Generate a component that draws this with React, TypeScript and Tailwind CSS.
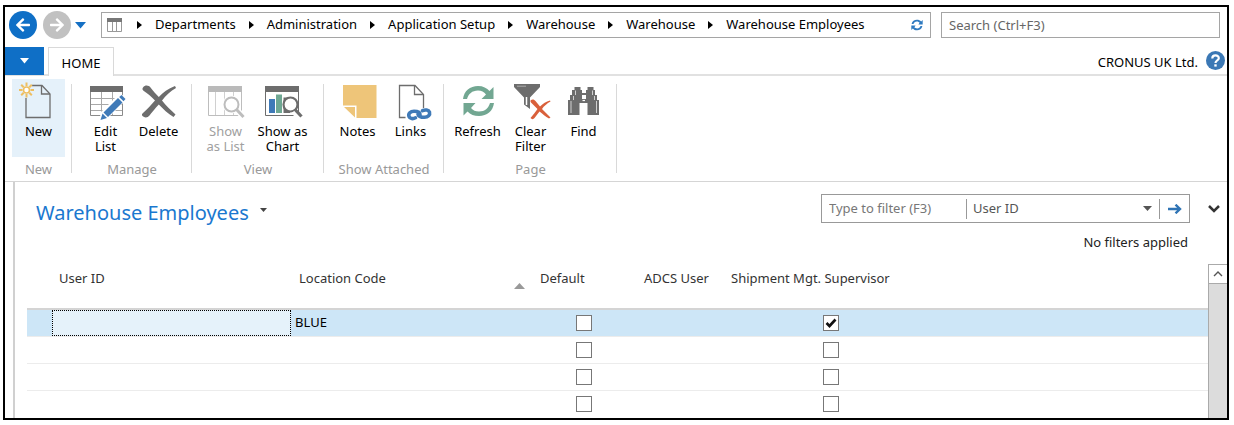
import { useState, type ReactNode } from "react";
import { FaArrowLeft, FaArrowRight } from "react-icons/fa";

const GRAY = "#6d6d6d";
const BLUE = "#3f7ab8";

function NewIcon() {
  return (
    <>
      <path d="M12 3.5H22L30 12V35.5H6V16" fill="none" stroke={GRAY} strokeWidth="1.3" />
      <path d="M21.5 3.5V12H30" fill="none" stroke={GRAY} strokeWidth="1.3" />
      <g stroke="#eebf62" strokeWidth="2">
        <circle cx="6.5" cy="8" r="3" fill="#fff" strokeWidth="1.6" />
        <path d="M6.5 0.5V4M6.5 12V15.5M-1 8H2.5M10.5 8H14M1.2 2.7L3.7 5.2M9.3 10.8L11.8 13.3M1.2 13.3L3.7 10.8M9.3 5.2L11.8 2.7" />
      </g>
    </>
  );
}

function EditListIcon() {
  return (
    <>
      <path d="M3.5 4.5H35.5V33.5H3.5Z" fill="#fff" stroke="#8a8a8a" />
      <path d="M3 4H36V10H3Z" fill={GRAY} />
      <path d="M4 16.5H35M4 22.5H35M4 28.5H35M14.5 10V33M25.5 10V33" stroke="#a8a8a8" />
      <path d="M12 39L14 30L33 11L40 17L21 36Z" fill="#fff" />
      <path d="M13.5 38L15.5 31.5L20 36Z" fill={BLUE} />
      <path d="M16.5 30.5L31 16L35.5 20.5L21 35Z" fill={BLUE} />
      <path d="M32.2 15L34.5 13L38.5 17L36.5 19.3Z" fill={BLUE} />
    </>
  );
}

function DeleteIcon() {
  return (
    <path
      fill={GRAY}
      d="M3 5.500C5 2.800 8.500 3 10.500 5.500C13 9 16 12 18.800 15C23 10.800 28 6.500 35 4L36 6C30.500 9 26 13.500 22 18.500C26 23.500 30.500 28 35.500 32.500L33.500 35C28 31.500 23 27 18.800 22.500C14.800 26.800 12 30.500 9.500 33.500C7.500 36 4.500 36 2.500 34C1.600 33 1.800 31.800 3 31C7.500 27 11 23 15 18.500C11.500 14.500 7 11.500 3.500 8.800C2.300 7.800 2.200 6.500 3 5.500Z"
    />
  );
}

function ShowListIcon() {
  return (
    <>
      <path d="M1.5 5.5H34.5V33.5H1.5Z" fill="#fff" stroke="#bdbdbd" />
      <path d="M1 4H35V10H1Z" fill="#bababa" />
      <path d="M8.5 10V33M17.5 10V33M26.5 10V33" stroke="#d0d0d0" />
      <circle cx="24.5" cy="22.5" r="9" fill="#fff" />
      <path d="M29 27L37.5 36" stroke="#fff" strokeWidth="6" />
      <circle cx="24.5" cy="22.5" r="7" fill="#fff" stroke="#bdbdbd" strokeWidth="2" />
      <path d="M29.5 27.5L36.500 35" stroke="#bdbdbd" strokeWidth="3" />
    </>
  );
}

function ShowChartIcon() {
  return (
    <>
      <path d="M1.5 5.5H34.5V33.5H1.5Z" fill="#fff" stroke={GRAY} />
      <path d="M1 4H35V10H1Z" fill={GRAY} />
      <path d="M5 17H11V31H5Z" fill={BLUE} />
      <path d="M12 12.5H18V31H12Z" fill="#6fa893" />
      <path d="M19.5 15.5H26V31H19.5Z" fill={GRAY} />
      <circle cx="26.5" cy="22.5" r="7" fill="#fff" stroke={GRAY} strokeWidth="2.2" />
      <path d="M29.5 29.5L35 36.5" stroke="#fff" strokeWidth="5" />
      <path d="M31 27.5L37.5 34.5" stroke={GRAY} strokeWidth="3.2" />
    </>
  );
}

function NotesIcon() {
  return (
    <>
      <path d="M4 3H37.5V36H17.5V23.5H4Z" fill="#eec579" />
      <path d="M5 25H16V35.5Z" fill="#eec579" />
    </>
  );
}

function LinksIcon() {
  return (
    <>
      <path d="M13.5 35.5H7.5V3.5H23L31.5 12.5V26" fill="none" stroke={GRAY} strokeWidth="1.3" />
      <path d="M22.5 3.5V12.5H31" fill="none" stroke={GRAY} strokeWidth="1.3" />
      <g fill="none" stroke={BLUE} strokeWidth="3.6" strokeLinecap="round">
        <path d="M23.5 35.8C21 37.200 18 36.800 17 34.500C16 31.500 18.500 29.300 22 29.300C26 29.300 28 30.500 28 32.500" />
        <path d="M30.500 28.700C33 27.500 36.500 27.800 37.500 30.200C38.300 33 36 35.300 32.500 35.300C28.500 35.300 26.500 34.200 26 32.200" />
      </g>
    </>
  );
}

function RefreshIcon() {
  return (
    <g fill="#72a792">
      <path d="M4 17C5 9 11 4 19 4C24 4 28 6 30.500 9L34.500 5V17H22.500L27 12.500C25 10 22.500 8.500 19 8.500C13 8.500 9.500 12 8 17Z" />
      <path d="M35 21C34 29 28 34 20 34C15 34 11.500 32.500 8.500 29.500L4.500 33.500V21H16.500L12 26C14 28.500 16.500 29.500 20 29.500C26 29.500 29.500 26 31 21Z" />
    </g>
  );
}

function ClearFilterIcon() {
  return (
    <>
      <path d="M2 2H28V5L18 15.500V27L12 22.500V15.500L2 5Z" fill={GRAY} />
      <path d="M5 4.200H14" stroke="#bbb" strokeWidth="0.8" />
      <path d="M14.5 15V23" stroke="#fff" strokeWidth="1.5" />
      <path
        fill="#d9603b"
        d="M19 18C20.500 17 22.500 17.500 23.500 19L28 24.500C31 21.500 34 19.500 38 18.500L38.500 19.500C35 21.500 32 24 30 27L38.500 35.500L37 36.500C33.500 34.500 30.500 32 27.500 29.500L22.500 36C21.500 37.500 19.500 37.500 18.500 36C21 33 23.500 30 25.500 27L19 20.500C18.300 19.500 18.300 18.500 19 18Z"
      />
    </>
  );
}

function FindIcon() {
  return (
    <g fill={GRAY}>
      <path d="M9.5 5H15.5V8H17V17H21V8H22.5V5H28.5V8H30V13H32V18H34V33H22.5V21H14.5V33H3V18H5V13H7V8H9.5Z" />
      <path d="M10.5 8.5V13M8.5 14V18M6 19V31M27.5 8.5V13M29.5 14V18M31.5 19V31" stroke="#dcdcdc" strokeWidth="0.9" />
      <path d="M17 12H21" stroke={GRAY} strokeWidth="2" />
      <path d="M17.5 18.5H20" stroke="#fff" strokeWidth="1.2" />
    </g>
  );
}

function RibbonButton({
  icon,
  label,
  active,
  disabled,
  wide,
}: {
  icon: ReactNode;
  label: string;
  active?: boolean;
  disabled?: boolean;
  wide?: boolean;
}) {
  return (
    <button
      type="button"
      disabled={disabled}
      className={`flex h-[78px] flex-col items-center gap-1 pt-[3px] ${wide ? "mr-1 w-[61px]" : "w-[53px]"} ${
        active ? "bg-[#e5f1fa]" : "hover:bg-[#e5f1fa]"
      } ${disabled ? "text-[#a0a0a0]" : "text-black"}`}
    >
      <svg viewBox="0 0 37 38" className="h-[38px] w-[37px] shrink-0 overflow-visible" aria-hidden="true">
        {icon}
      </svg>
      <span className="leading-[15px] whitespace-pre">{label}</span>
    </button>
  );
}

function RibbonGroup({ label, children }: { label: string; children: ReactNode }) {
  return (
    <section aria-label={label} className="relative px-[7px] after:absolute after:top-[5px] after:right-0 after:h-[89px] after:w-px after:bg-[#d9d9d9]">
      <div className="flex">{children}</div>
      <div className="pt-1 text-center leading-4 text-[#999]">{label}</div>
    </section>
  );
}

function Check({ label, initial = false }: { label: string; initial?: boolean }) {
  const [checked, setChecked] = useState(initial);
  return (
    <span className="relative mx-auto block size-4">
      <input
        type="checkbox"
        aria-label={label}
        checked={checked}
        onChange={() => setChecked(!checked)}
        className="block size-4 appearance-none border border-[#777] bg-white"
      />
      {checked && (
        <svg viewBox="0 0 16 16" className="pointer-events-none absolute inset-0 size-4" aria-hidden="true">
          <path d="M3.500 8L6.500 11L12.500 4.500" fill="none" stroke="#111" strokeWidth="2.6" />
        </svg>
      )}
    </span>
  );
}

const crumbs = ["Departments", "Administration", "Application Setup", "Warehouse", "Warehouse", "Warehouse Employees"];

const rows = [
  { location: "BLUE", supervisor: true },
  { location: "", supervisor: false },
  { location: "", supervisor: false },
  { location: "", supervisor: false },
];

export default function App() {
  return (
    <div className="overflow-hidden bg-white pt-[5px] pr-[5px] pb-1.5 pl-[3px] font-['Noto_Sans','Open_Sans',sans-serif] text-[13px] text-black">
      <div className="border-2 border-black">
        <header className="flex h-10 items-center pr-[7px] pb-1 pl-1">
          <button type="button" aria-label="Back" className="grid size-7 place-items-center rounded-full bg-[#0f6fc6] text-white">
            <FaArrowLeft className="size-4" />
          </button>
          <button type="button" aria-label="Forward" className="ml-1.5 grid size-7 place-items-center rounded-full bg-[#c1c1c1] text-white">
            <FaArrowRight className="size-4" />
          </button>
          <button type="button" aria-label="History" className="ml-1">
            <svg viewBox="0 0 11 7" className="h-[7px] w-[11px]">
              <path d="M0 0H11L5.5 6.5Z" fill="#1570c4" />
            </svg>
          </button>
          <nav aria-label="Address" className="ml-[15px] flex h-[26px] min-w-0 grow items-center border border-[#a5a5a5] pl-[5px] whitespace-nowrap">
            <svg viewBox="0 0 15 14" className="h-[14px] w-[15px] shrink-0" aria-hidden="true">
              <path d="M0.5 0.5H14.5V13.5H0.5ZM5.5 3V13M9.5 3V13" fill="none" stroke="#999" />
              <path d="M0 0H15V4H0Z" fill="#777" />
            </svg>
            <ol className="flex grow items-center pl-0.5">
              {crumbs.map((crumb, i) => (
                <li key={i} className="flex items-center">
                  <svg viewBox="0 0 5 8" className="ml-[13px] h-2 w-[5px]" aria-hidden="true">
                    <path d="M0 0L5 4L0 8Z" fill="#000" />
                  </svg>
                  <a href="#" className="ml-[13px]">
                    {crumb}
                  </a>
                </li>
              ))}
            </ol>
            <button type="button" aria-label="Reload" className="mr-[7px]">
              <svg viewBox="0 0 39 38" className="h-3 w-3">
                <g fill="#2f7ac0">
                  <path d="M2 16C4 6 11 2 19 2C25 2 30 4 33 8L38 3V17H24L28 12C26 10 23 8 19 8C13 8 10 11 8 16Z" />
                  <path d="M37 22C35 32 28 36 20 36C14 36 9 34 6 30L1 35V21H15L11 26C13 28 16 30 20 30C26 30 29 27 31 22Z" />
                </g>
              </svg>
            </button>
          </nav>
          <input
            type="search"
            aria-label="Search"
            placeholder="Search (Ctrl+F3)"
            className="ml-2.5 h-[26px] w-[279px] border border-[#a5a5a5] px-[7px] outline-none placeholder:text-[#666]"
          />
        </header>

        <div className="flex h-[29px] items-stretch border-b-2 border-[#e1e1e1]">
          <button type="button" aria-label="Application menu" className="grid h-7 w-[39px] place-items-center bg-[#0f6fc6]">
            <svg viewBox="0 0 9 6" className="h-1.5 w-[9px]">
              <path d="M0 0H9L4.5 5.5Z" fill="#fff" />
            </svg>
          </button>
          <button type="button" className="ml-1 h-[29px] w-[66px] border border-b-0 border-[#d9d9d9] bg-white pt-1">
            HOME
          </button>
          <span className="ml-auto self-center pt-1">CRONUS UK Ltd.</span>
          <button type="button" aria-label="Help" className="mr-0.5 ml-2 self-center">
            <svg viewBox="0 0 19 19" className="size-[19px]">
              <circle cx="9.5" cy="9.5" r="9.5" fill="#3b78b5" />
              <path d="M6.3 7.5C6.3 3.5 12.8 3.5 12.8 7.2C12.8 9.5 9.5 9.3 9.5 12" fill="none" stroke="#fff" strokeWidth="2.2" />
              <path d="M8.3 13.3H10.7V15.6H8.3Z" fill="#fff" />
            </svg>
          </button>
        </div>

        <div className="flex h-[106px] border-b border-[#d5d5d5] pt-[3px]">
          <RibbonGroup label="New">
            <RibbonButton icon={<NewIcon />} label="New" active />
          </RibbonGroup>
          <RibbonGroup label="Manage">
            <RibbonButton icon={<EditListIcon />} label={"Edit\nList"} />
            <RibbonButton icon={<DeleteIcon />} label="Delete" />
          </RibbonGroup>
          <RibbonGroup label="View">
            <RibbonButton icon={<ShowListIcon />} label={"Show\nas List"} disabled />
            <RibbonButton icon={<ShowChartIcon />} label={"Show as\nChart"} wide />
          </RibbonGroup>
          <RibbonGroup label="Show Attached">
            <RibbonButton icon={<NotesIcon />} label="Notes" />
            <RibbonButton icon={<LinksIcon />} label="Links" />
          </RibbonGroup>
          <RibbonGroup label="Page">
            <RibbonButton icon={<RefreshIcon />} label="Refresh" />
            <RibbonButton icon={<ClearFilterIcon />} label={"Clear\nFilter"} />
            <RibbonButton icon={<FindIcon />} label="Find" />
          </RibbonGroup>
        </div>

        <div className="flex">
          <div className="w-2.5 shrink-0 border-r-2 border-[#d0d0d0]" />
          <main className="min-w-0 grow pl-3">
            <div className="flex h-[60px] items-start pt-3">
              <h1 className="ml-[9px] text-[20px] leading-[38px] text-[#1a78cf]">Warehouse Employees</h1>
              <button type="button" aria-label="Page menu" className="ml-[11px] flex h-8 items-center">
                <svg viewBox="0 0 7 4" className="h-1 w-[7px]">
                  <path d="M0 0H7L3.5 4Z" fill="#444" />
                </svg>
              </button>
              <div className="ml-auto flex h-[29px] w-[369px] items-center border border-[#999]">
                <input
                  type="text"
                  aria-label="Type to filter"
                  placeholder="Type to filter (F3)"
                  className="h-full w-[144px] px-[7px] pb-0.5 outline-none placeholder:text-[#777]"
                />
                <span className="relative flex h-5 grow items-center border-x border-[#999]">
                  <select aria-label="Filter field" className="w-full appearance-none bg-transparent pl-1.5 text-[#555] outline-none">
                    <option>User ID</option>
                    <option>Location Code</option>
                  </select>
                  <svg viewBox="0 0 9 5" className="pointer-events-none absolute right-[7px] h-[5px] w-[9px]" aria-hidden="true">
                    <path d="M0 0H9L4.5 5Z" fill="#555" />
                  </svg>
                </span>
                <button type="button" aria-label="Apply filter" className="grid w-[29px] place-items-center">
                  <svg viewBox="0 0 14 10" className="h-2.5 w-3.5">
                    <path d="M0 5H12M7.500 0.700L12 5L7.500 9.300" fill="none" stroke="#2f74b5" strokeWidth="2.4" />
                  </svg>
                </button>
              </div>
              <button type="button" aria-label="Expand filter pane" className="mr-[7px] ml-[18px] flex h-[29px] items-center">
                <svg viewBox="0 0 12 8" className="h-2 w-3">
                  <path d="M1 1L6 6L11 1" fill="none" stroke="#333" strokeWidth="2.5" />
                </svg>
              </button>
            </div>
            <div className="-mt-2 h-[30px] pr-[39px] text-right leading-4 text-[#222]">No filters applied</div>
            <div className="flex">
              <table className="min-w-0 grow table-fixed border-collapse text-left">
                <colgroup>
                  <col className="w-[25px]" />
                  <col className="w-[239px]" />
                  <col className="w-[238px]" />
                  <col className="w-[109px]" />
                  <col className="w-[81px]" />
                  <col className="w-[224px]" />
                  <col />
                </colgroup>
                <thead className="text-[#333]">
                  <tr className="h-[45px] border-b-2 border-[#d4d4d4] align-top [&>th]:pt-[5px] [&>th]:font-normal [&>th]:whitespace-nowrap">
                    <th aria-label="Row" />
                    <th className="pl-[7px]">User ID</th>
                    <th className="pr-1 pl-2">
                      <span className="flex items-end justify-between">
                        Location Code
                        <svg viewBox="0 0 11 6" className="h-1.5 w-[11px]" aria-label="Sorted ascending">
                          <path d="M0 6L5.5 0L11 6Z" fill="#999" />
                        </svg>
                      </span>
                    </th>
                    <th className="pl-[11px]">Default</th>
                    <th className="pl-1.5">ADCS User</th>
                    <th className="pl-3">Shipment Mgt. Supervisor</th>
                    <th aria-label="More" />
                  </tr>
                </thead>
                <tbody>
                  {rows.map((row, i) => (
                    <tr key={i} className={`h-[27px] border-b border-[#ececec] last:border-0 ${i === 0 ? "bg-[#cde6f7]" : ""}`}>
                      <td />
                      <td className="p-0">
                        <input
                          type="text"
                          aria-label={`User ID, row ${i + 1}`}
                          className={`block h-[26px] w-full px-1 outline-none ${
                            i === 0 ? "border border-dotted border-black bg-[#e5f2fa]" : ""
                          }`}
                        />
                      </td>
                      <td className="p-0 pl-1">{row.location}</td>
                      <td className="p-0">
                        <Check label={`Default, row ${i + 1}`} />
                      </td>
                      <td />
                      <td className="p-0">
                        <Check label={`Shipment Mgt. Supervisor, row ${i + 1}`} initial={row.supervisor} />
                      </td>
                      <td />
                    </tr>
                  ))}
                </tbody>
              </table>
              <div className="flex w-[19px] shrink-0 flex-col border-l border-[#aaa] bg-[#dcdcdc]">
                <button type="button" aria-label="Scroll up" className="grid h-5 place-items-center border-y border-[#aaa] bg-white">
                  <svg viewBox="0 0 10 6" className="h-1.5 w-2.5">
                    <path d="M1 5L5 1L9 5" fill="none" stroke="#555" strokeWidth="1.4" />
                  </svg>
                </button>
              </div>
            </div>
          </main>
        </div>
      </div>
    </div>
  );
}
